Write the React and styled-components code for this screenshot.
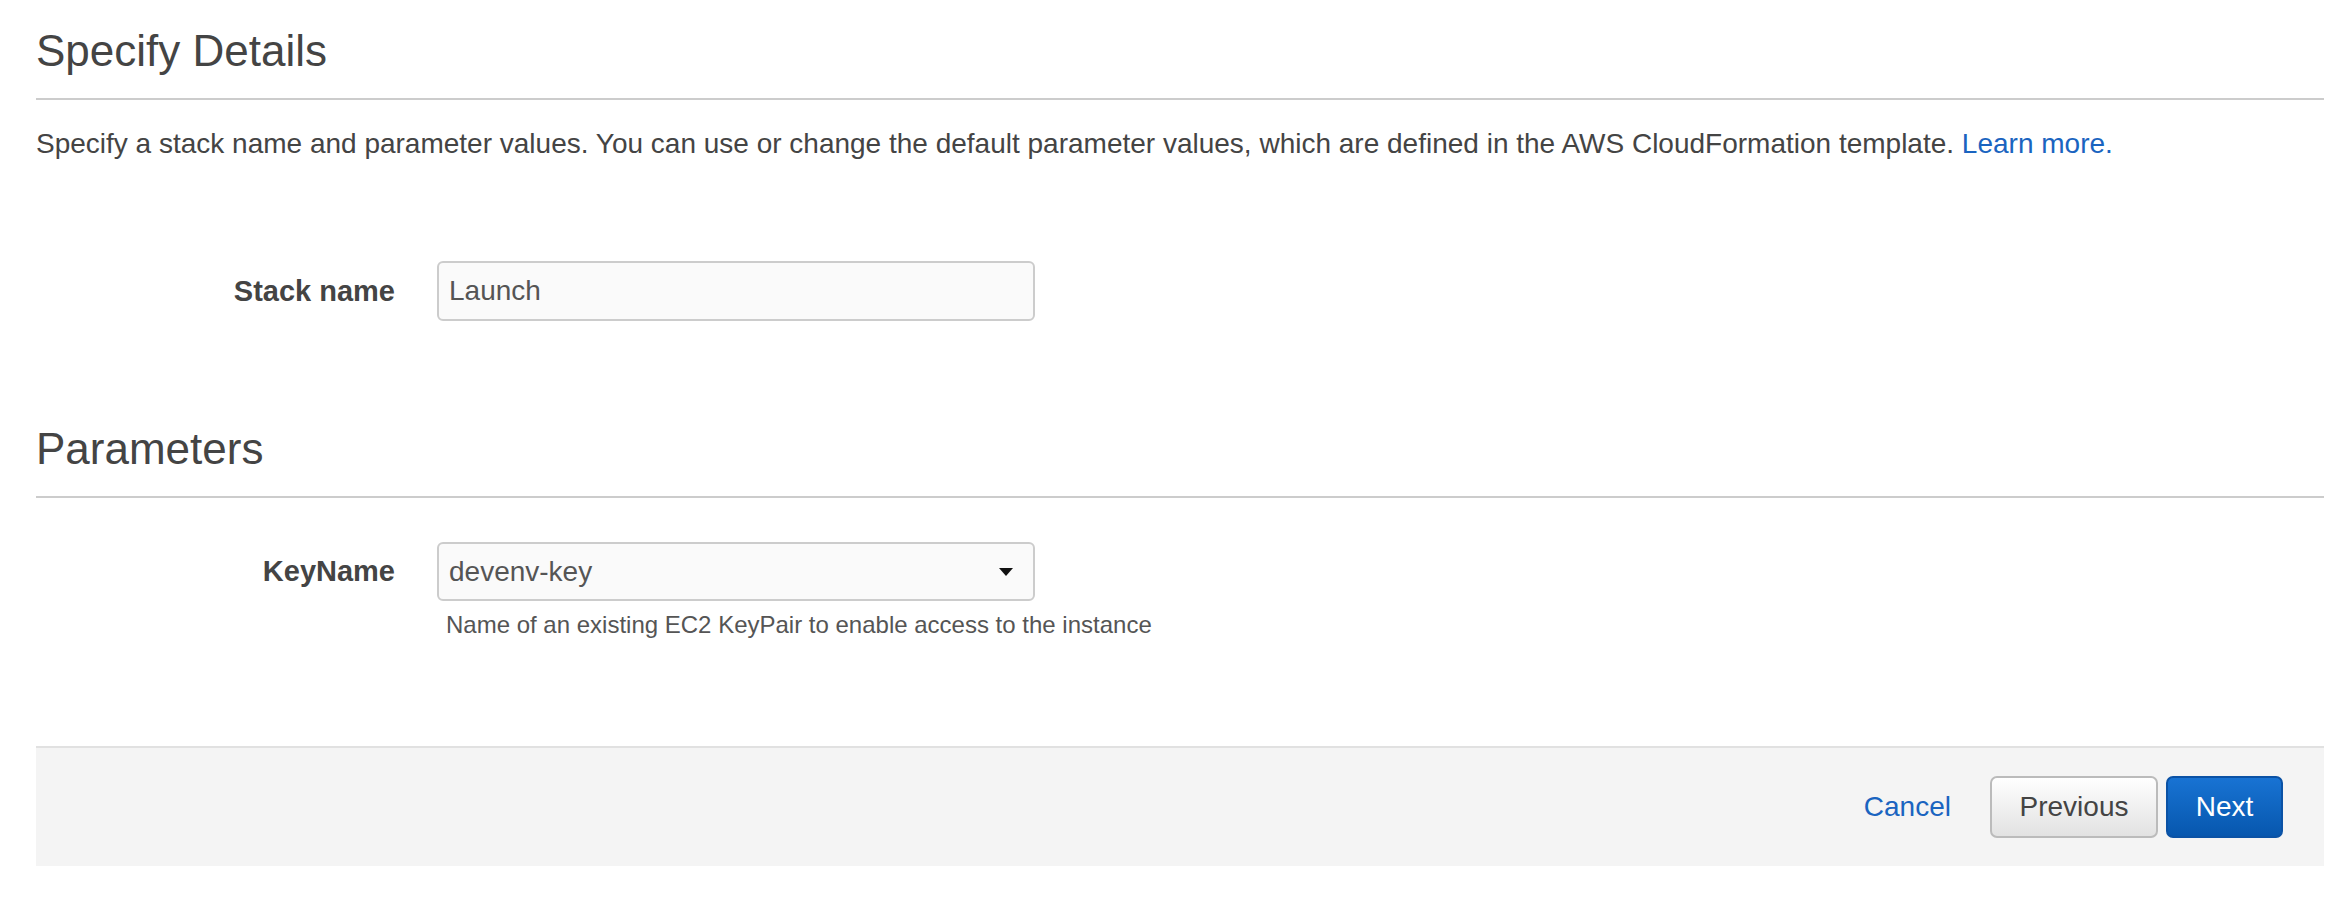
import React from 'react';
import styled, { createGlobalStyle } from 'styled-components';

const GlobalStyle = createGlobalStyle`
  html, body {
    margin: 0;
    padding: 0;
    background: #ffffff;
  }
  body {
    font-family: "Liberation Sans", Arial, sans-serif;
    color: #444444;
  }
`;

const Page = styled.div`
  width: 2346px;
  height: 910px;
  box-sizing: border-box;
  padding: 0 22px 0 36px;
  overflow: hidden;
`;

const Title = styled.h2`
  margin: ${(p) => p.$top}px 0 0;
  padding-bottom: 22px;
  border-bottom: 2px solid #cccccc;
  font-size: 44px;
  line-height: 50px;
  font-weight: normal;
  color: #444444;
`;

const Description = styled.p`
  margin: 29px 0 0;
  font-size: 28px;
  line-height: 30px;
  color: #444444;
  white-space: nowrap;
`;

const Link = styled.a`
  color: #1a64c0;
  text-decoration: none;
  cursor: pointer;
`;

const FormRow = styled.div`
  display: grid;
  grid-template-columns: 359px 598px;
  column-gap: 42px;
  align-items: center;
  margin-top: ${(p) => p.$top}px;
`;

const Label = styled.label`
  text-align: right;
  font-size: 29px;
  font-weight: bold;
  color: #444444;
`;

const Field = styled.div`
  grid-column: 2;
  display: flex;
  flex-direction: column;
`;

const TextInput = styled.input`
  box-sizing: border-box;
  width: 598px;
  height: 60px;
  padding: 0 10px;
  border: 2px solid #cccccc;
  border-radius: 6px;
  background: #fafafa;
  font-family: "Liberation Sans", Arial, sans-serif;
  font-size: 28px;
  color: #555555;
  outline: none;
`;

const SelectBox = styled.div`
  box-sizing: border-box;
  width: 598px;
  height: 59px;
  padding: 0 20px 0 10px;
  border: 2px solid #cccccc;
  border-radius: 6px;
  background: #fafafa;
  display: flex;
  align-items: center;
  justify-content: space-between;
  font-size: 28px;
  color: #555555;
`;

const Caret = styled.span`
  width: 0;
  height: 0;
  border-left: 7.5px solid transparent;
  border-right: 7.5px solid transparent;
  border-top: 8px solid #111111;
`;

const Help = styled.div`
  grid-column: 2;
  margin-top: 10px;
  padding-left: 9px;
  font-size: 24px;
  line-height: 28px;
  color: #555555;
  white-space: nowrap;
`;

const Footer = styled.div`
  margin-top: 107px;
  height: 118px;
  border-top: 2px solid #e1e1e1;
  background: #f4f4f4;
  display: flex;
  align-items: center;
  justify-content: flex-end;
  padding-right: 41px;
  gap: 8px;
`;

const CancelLink = styled(Link)`
  font-size: 28px;
  margin-right: 31px;
`;

const Button = styled.button`
  box-sizing: border-box;
  height: 62px;
  padding: 0 26px;
  border-radius: 7px;
  font-family: "Liberation Sans", Arial, sans-serif;
  font-size: 28px;
  cursor: pointer;
  border: 2px solid ${(p) => (p.$primary ? '#0b52a5' : '#bbbbbb')};
  color: ${(p) => (p.$primary ? '#ffffff' : '#444444')};
  background: ${(p) =>
    p.$primary
      ? 'linear-gradient(#1873d3, #0757ae)'
      : 'linear-gradient(#ffffff, #e2e2e2)'};
  min-width: ${(p) => (p.$primary ? 117 : 168)}px;
`;

export default function App() {
  return (
    <Page>
      <GlobalStyle />
      <Title $top={26}>Specify Details</Title>
      <Description>
        Specify a stack name and parameter values. You can use or change the default parameter
        values, which are defined in the AWS CloudFormation template.{' '}
        <Link>Learn more.</Link>
      </Description>

      <FormRow $top={102}>
        <Label>Stack name</Label>
        <TextInput defaultValue="Launch" />
      </FormRow>

      <Title $top={103}>Parameters</Title>

      <FormRow $top={44}>
        <Label>KeyName</Label>
        <Field>
          <SelectBox>
            <span>devenv-key</span>
            <Caret />
          </SelectBox>
        </Field>
        <Help>Name of an existing EC2 KeyPair to enable access to the instance</Help>
      </FormRow>

      <Footer>
        <CancelLink>Cancel</CancelLink>
        <Button>Previous</Button>
        <Button $primary>Next</Button>
      </Footer>
    </Page>
  );
}
